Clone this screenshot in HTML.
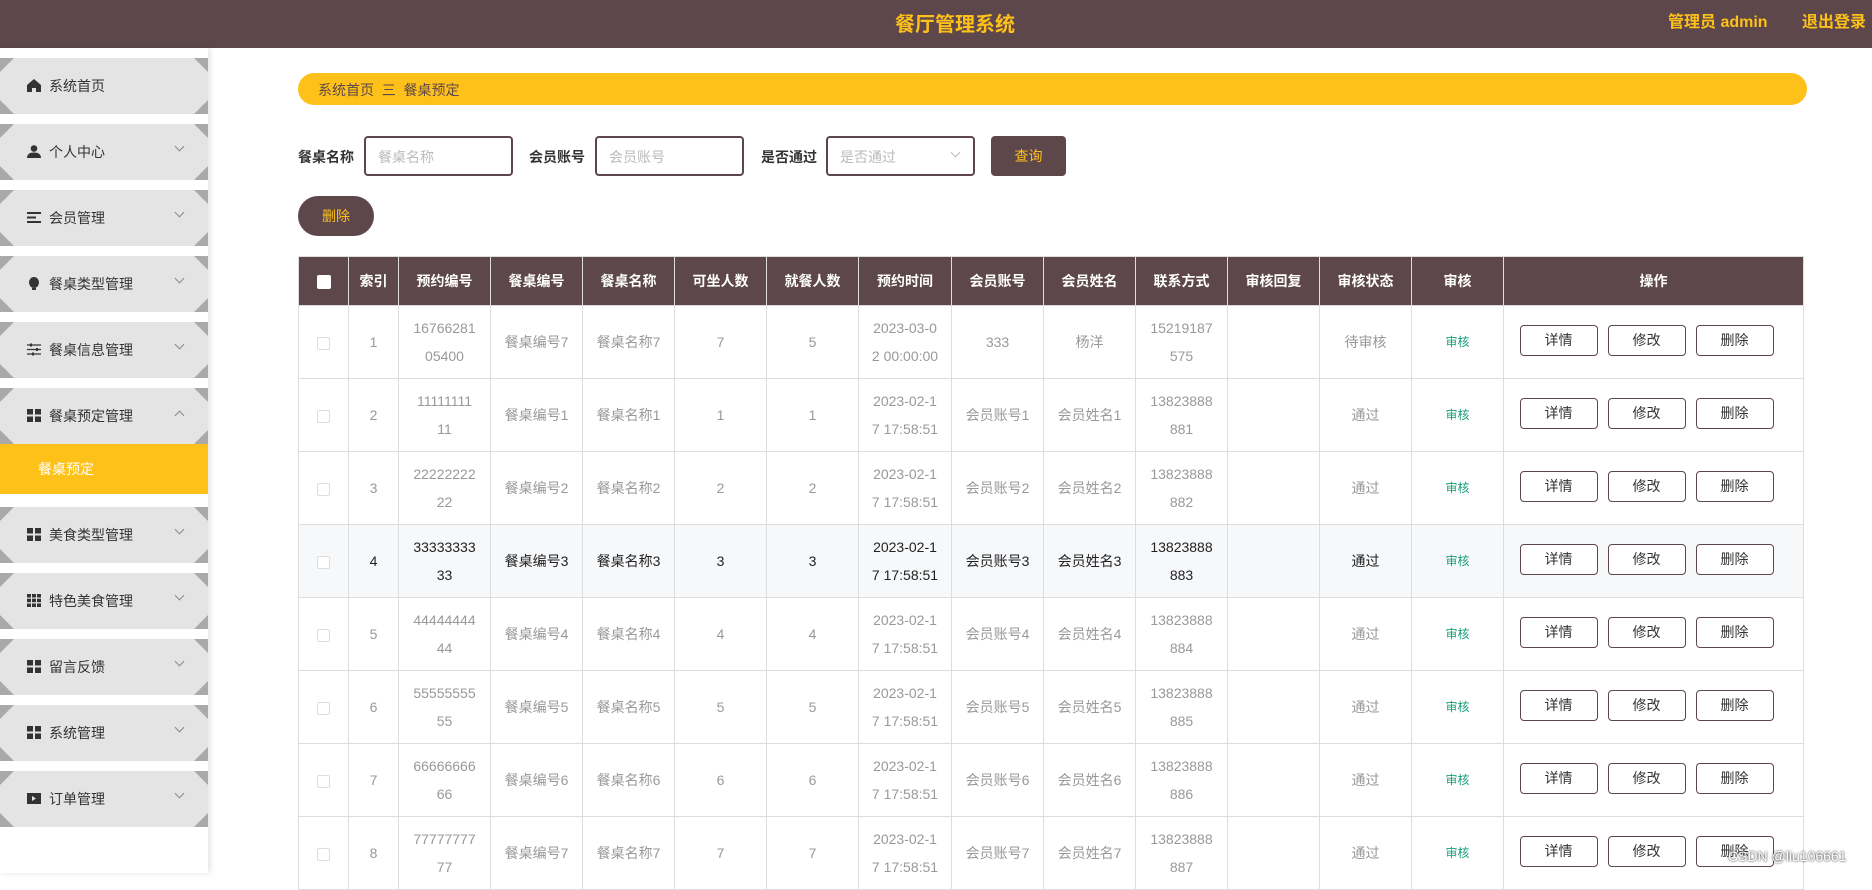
<!DOCTYPE html>
<html><head><meta charset="utf-8">
<style>
*{box-sizing:border-box;margin:0;padding:0}
body{width:1872px;height:873px;overflow:hidden;background:#fff;font-family:"Liberation Sans","Noto Sans CJK SC",sans-serif;position:relative}
.hdr{position:absolute;left:0;top:0;width:1872px;height:48px;background:#5d474b}
.hdr .t{position:absolute;left:0;width:1910px;text-align:center;top:8px;font-size:20px;font-weight:bold;color:#fec11a}
.hdr .u{position:absolute;top:8px;font-size:16px;font-weight:bold;color:#fec11a}
.side{position:absolute;left:0;top:48px;width:208px;height:825px;background:#fff;box-shadow:2px 0 6px rgba(0,0,0,.12)}
.mi{position:absolute;left:0;width:208px;height:56px;background:#a9a9a9}
.mi .in{position:absolute;inset:0;background:#e4e4e4;clip-path:polygon(14px 0,calc(100% - 14px) 0,100% 14px,100% calc(100% - 14px),calc(100% - 14px) 100%,14px 100%,0 calc(100% - 14px),0 14px)}
.mi .lb{position:absolute;left:49px;top:18px;font-size:14px;color:#333}
.mi .ic{position:absolute;left:27px;top:21px;width:14px;height:13px;color:#333}
.mi .ch{position:absolute;left:176px;top:19px;width:7px;height:7px;border-right:1px solid #888;border-bottom:1px solid #888;transform:rotate(45deg)}
.mi .ch.up{transform:rotate(-135deg);top:24px}
.sub{position:absolute;left:0;top:396px;width:208px;height:50px;background:#fec11a;color:#fff;font-size:14px;padding:15px 0 0 38px}
.bc{position:absolute;left:298px;top:73px;width:1509px;height:32px;background:#fec11a;border-radius:16px;font-size:14px;color:#5d474b;padding:7px 0 0 20px}
.lab{position:absolute;top:147px;font-size:14px;color:#333;font-weight:bold}
.inp{position:absolute;top:136px;height:40px;border:2px solid #5d474b;border-radius:4px;font-size:14px;color:#bbb;padding:9px 0 0 12px}
.btn{position:absolute;background:#5d474b;color:#fec11a;font-size:14px;text-align:center}
table{position:absolute;left:298px;top:256px;border-collapse:collapse;table-layout:fixed;width:1505px}
th{background:#5d474b;color:#fff;font-size:14px;height:49px;border:1px solid #ddd;font-weight:bold}
td{height:73px;border:1px solid #ddd;text-align:center;font-size:14px;color:#999;line-height:28px}
tr.hv td{background:#f7f8fa;color:#222}
.cb{display:inline-block;width:13px;height:13px;border:1px solid #ddd;background:#fff;border-radius:2px;vertical-align:middle}
th .cb{width:14px;height:14px;border:none}
.sh{color:#1a9e7a;font-size:12px}
.ob{display:inline-block;width:78px;height:31px;border:1px solid #5d474b;border-radius:4px;color:#333;line-height:29px;margin:0 4px;font-size:14px;background:#fff}
td.op{white-space:nowrap;padding-right:14px;font-size:0}
td.op .ob{font-size:14px;margin:0 5px}
</style></head><body>
<div class="hdr"><div class="t">餐厅管理系统</div><div class="u" style="left:1668px">管理员 admin</div><div class="u" style="left:1802px">退出登录</div></div>
<div class="side">
<div class="mi" style="top:10px"><div class="in"></div><svg class="ic" viewBox="0 0 14 13"><path d="M7 0L0 6v7h5V9h4v4h5V6z" fill="#333"/></svg><div class="lb">系统首页</div></div>
<div class="mi" style="top:76px"><div class="in"></div><svg class="ic" viewBox="0 0 14 13"><circle cx="7" cy="3.5" r="3.3" fill="#333"/><path d="M0 13c0-4 3-5.5 7-5.5s7 1.5 7 5.5z" fill="#333"/></svg><div class="lb">个人中心</div><div class="ch"></div></div>
<div class="mi" style="top:142px"><div class="in"></div><svg class="ic" viewBox="0 0 14 13"><path d="M0 2h14M0 6.5h9M0 11h14" stroke="#333" stroke-width="2"/></svg><div class="lb">会员管理</div><div class="ch"></div></div>
<div class="mi" style="top:208px"><div class="in"></div><svg class="ic" viewBox="0 0 14 13"><ellipse cx="7" cy="5.5" rx="5" ry="5.5" fill="#333"/><rect x="5" y="11" width="4" height="2" fill="#333"/></svg><div class="lb">餐桌类型管理</div><div class="ch"></div></div>
<div class="mi" style="top:274px"><div class="in"></div><svg class="ic" viewBox="0 0 14 13"><path d="M0 2h14M0 6.5h14M0 11h14" stroke="#333" stroke-width="1.3"/><rect x="3" y="0.5" width="2" height="3" fill="#333"/><rect x="9" y="5" width="2" height="3" fill="#333"/><rect x="5" y="9.5" width="2" height="3" fill="#333"/></svg><div class="lb">餐桌信息管理</div><div class="ch"></div></div>
<div class="mi" style="top:340px"><div class="in"></div><svg class="ic" viewBox="0 0 14 13"><rect x="0" y="0" width="6" height="5.5" fill="#333"/><rect x="8" y="0" width="6" height="5.5" fill="#333"/><rect x="0" y="7.5" width="6" height="5.5" fill="#333"/><rect x="8" y="7.5" width="6" height="5.5" fill="#333"/></svg><div class="lb">餐桌预定管理</div><div class="ch up"></div></div>
<div class="sub">餐桌预定</div>
<div class="mi" style="top:459px"><div class="in"></div><svg class="ic" viewBox="0 0 14 13"><rect x="0" y="0" width="6" height="5.5" fill="#333"/><rect x="8" y="0" width="6" height="5.5" fill="#333"/><rect x="0" y="7.5" width="6" height="5.5" fill="#333"/><rect x="8" y="7.5" width="6" height="5.5" fill="#333"/></svg><div class="lb">美食类型管理</div><div class="ch"></div></div>
<div class="mi" style="top:525px"><div class="in"></div><svg class="ic" viewBox="0 0 14 13"><g fill="#333"><rect x="0" y="0" width="4" height="3.5"/><rect x="5" y="0" width="4" height="3.5"/><rect x="10" y="0" width="4" height="3.5"/><rect x="0" y="4.7" width="4" height="3.5"/><rect x="5" y="4.7" width="4" height="3.5"/><rect x="10" y="4.7" width="4" height="3.5"/><rect x="0" y="9.5" width="4" height="3.5"/><rect x="5" y="9.5" width="4" height="3.5"/><rect x="10" y="9.5" width="4" height="3.5"/></g></svg><div class="lb">特色美食管理</div><div class="ch"></div></div>
<div class="mi" style="top:591px"><div class="in"></div><svg class="ic" viewBox="0 0 14 13"><rect x="0" y="0" width="6" height="5.5" fill="#333"/><rect x="8" y="0" width="6" height="5.5" fill="#333"/><rect x="0" y="7.5" width="6" height="5.5" fill="#333"/><rect x="8" y="7.5" width="6" height="5.5" fill="#333"/></svg><div class="lb">留言反馈</div><div class="ch"></div></div>
<div class="mi" style="top:657px"><div class="in"></div><svg class="ic" viewBox="0 0 14 13"><rect x="0" y="0" width="6" height="5.5" fill="#333"/><rect x="8" y="0" width="6" height="5.5" fill="#333"/><rect x="0" y="7.5" width="6" height="5.5" fill="#333"/><rect x="8" y="7.5" width="6" height="5.5" fill="#333"/></svg><div class="lb">系统管理</div><div class="ch"></div></div>
<div class="mi" style="top:723px"><div class="in"></div><svg class="ic" viewBox="0 0 14 13"><path d="M0 1h14v11H0z M5 4l4 2.5L5 9z" fill="#333" fill-rule="evenodd"/></svg><div class="lb">订单管理</div><div class="ch"></div></div>
</div>
<div class="bc">系统首页 &nbsp;<span style="color:#5d474b">三</span>&nbsp; 餐桌预定</div>
<div class="lab" style="left:298px">餐桌名称</div><div class="inp" style="left:364px;width:149px">餐桌名称</div>
<div class="lab" style="left:529px">会员账号</div><div class="inp" style="left:595px;width:149px">会员账号</div>
<div class="lab" style="left:761px">是否通过</div><div class="inp" style="left:826px;width:149px">是否通过<span style="position:absolute;right:14px;top:11px;width:7px;height:7px;border-right:1px solid #bbb;border-bottom:1px solid #bbb;transform:rotate(45deg)"></span></div>
<div class="btn" style="left:991px;top:136px;width:75px;height:40px;border-radius:4px;line-height:40px">查询</div>
<div class="btn" style="left:298px;top:196px;width:76px;height:40px;border-radius:20px;line-height:40px">删除</div>
<table>
<colgroup><col style="width:50px"><col style="width:50px"><col style="width:92px"><col style="width:92px"><col style="width:92px"><col style="width:92px"><col style="width:92px"><col style="width:93px"><col style="width:92px"><col style="width:92px"><col style="width:92px"><col style="width:92px"><col style="width:92px"><col style="width:92px"><col style="width:300px"></colgroup>
<tr><th><span class="cb"></span></th><th>索引</th><th>预约编号</th><th>餐桌编号</th><th>餐桌名称</th><th>可坐人数</th><th>就餐人数</th><th>预约时间</th><th>会员账号</th><th>会员姓名</th><th>联系方式</th><th>审核回复</th><th>审核状态</th><th>审核</th><th>操作</th></tr>
<tr><td><span class="cb"></span></td><td>1</td><td>16766281<br>05400</td><td>餐桌编号7</td><td>餐桌名称7</td><td>7</td><td>5</td><td>2023-03-0<br>2 00:00:00</td><td>333</td><td>杨洋</td><td>15219187<br>575</td><td></td><td>待审核</td><td class="sh">审核</td><td class="op"><span class="ob">详情</span><span class="ob">修改</span><span class="ob">删除</span></td></tr>
<tr><td><span class="cb"></span></td><td>2</td><td>11111111<br>11</td><td>餐桌编号1</td><td>餐桌名称1</td><td>1</td><td>1</td><td>2023-02-1<br>7 17:58:51</td><td>会员账号1</td><td>会员姓名1</td><td>13823888<br>881</td><td></td><td>通过</td><td class="sh">审核</td><td class="op"><span class="ob">详情</span><span class="ob">修改</span><span class="ob">删除</span></td></tr>
<tr><td><span class="cb"></span></td><td>3</td><td>22222222<br>22</td><td>餐桌编号2</td><td>餐桌名称2</td><td>2</td><td>2</td><td>2023-02-1<br>7 17:58:51</td><td>会员账号2</td><td>会员姓名2</td><td>13823888<br>882</td><td></td><td>通过</td><td class="sh">审核</td><td class="op"><span class="ob">详情</span><span class="ob">修改</span><span class="ob">删除</span></td></tr>
<tr class="hv"><td><span class="cb"></span></td><td>4</td><td>33333333<br>33</td><td>餐桌编号3</td><td>餐桌名称3</td><td>3</td><td>3</td><td>2023-02-1<br>7 17:58:51</td><td>会员账号3</td><td>会员姓名3</td><td>13823888<br>883</td><td></td><td>通过</td><td class="sh" style="color:#1a9e7a">审核</td><td class="op"><span class="ob">详情</span><span class="ob">修改</span><span class="ob">删除</span></td></tr>
<tr><td><span class="cb"></span></td><td>5</td><td>44444444<br>44</td><td>餐桌编号4</td><td>餐桌名称4</td><td>4</td><td>4</td><td>2023-02-1<br>7 17:58:51</td><td>会员账号4</td><td>会员姓名4</td><td>13823888<br>884</td><td></td><td>通过</td><td class="sh">审核</td><td class="op"><span class="ob">详情</span><span class="ob">修改</span><span class="ob">删除</span></td></tr>
<tr><td><span class="cb"></span></td><td>6</td><td>55555555<br>55</td><td>餐桌编号5</td><td>餐桌名称5</td><td>5</td><td>5</td><td>2023-02-1<br>7 17:58:51</td><td>会员账号5</td><td>会员姓名5</td><td>13823888<br>885</td><td></td><td>通过</td><td class="sh">审核</td><td class="op"><span class="ob">详情</span><span class="ob">修改</span><span class="ob">删除</span></td></tr>
<tr><td><span class="cb"></span></td><td>7</td><td>66666666<br>66</td><td>餐桌编号6</td><td>餐桌名称6</td><td>6</td><td>6</td><td>2023-02-1<br>7 17:58:51</td><td>会员账号6</td><td>会员姓名6</td><td>13823888<br>886</td><td></td><td>通过</td><td class="sh">审核</td><td class="op"><span class="ob">详情</span><span class="ob">修改</span><span class="ob">删除</span></td></tr>
<tr><td><span class="cb"></span></td><td>8</td><td>77777777<br>77</td><td>餐桌编号7</td><td>餐桌名称7</td><td>7</td><td>7</td><td>2023-02-1<br>7 17:58:51</td><td>会员账号7</td><td>会员姓名7</td><td>13823888<br>887</td><td></td><td>通过</td><td class="sh">审核</td><td class="op"><span class="ob">详情</span><span class="ob">修改</span><span class="ob">删除</span></td></tr>
</table>
<div style="position:absolute;left:1728px;top:848px;font-size:14px;color:#fff;text-shadow:0 0 2px #000">CSDN @liu106661</div>
</body></html>
